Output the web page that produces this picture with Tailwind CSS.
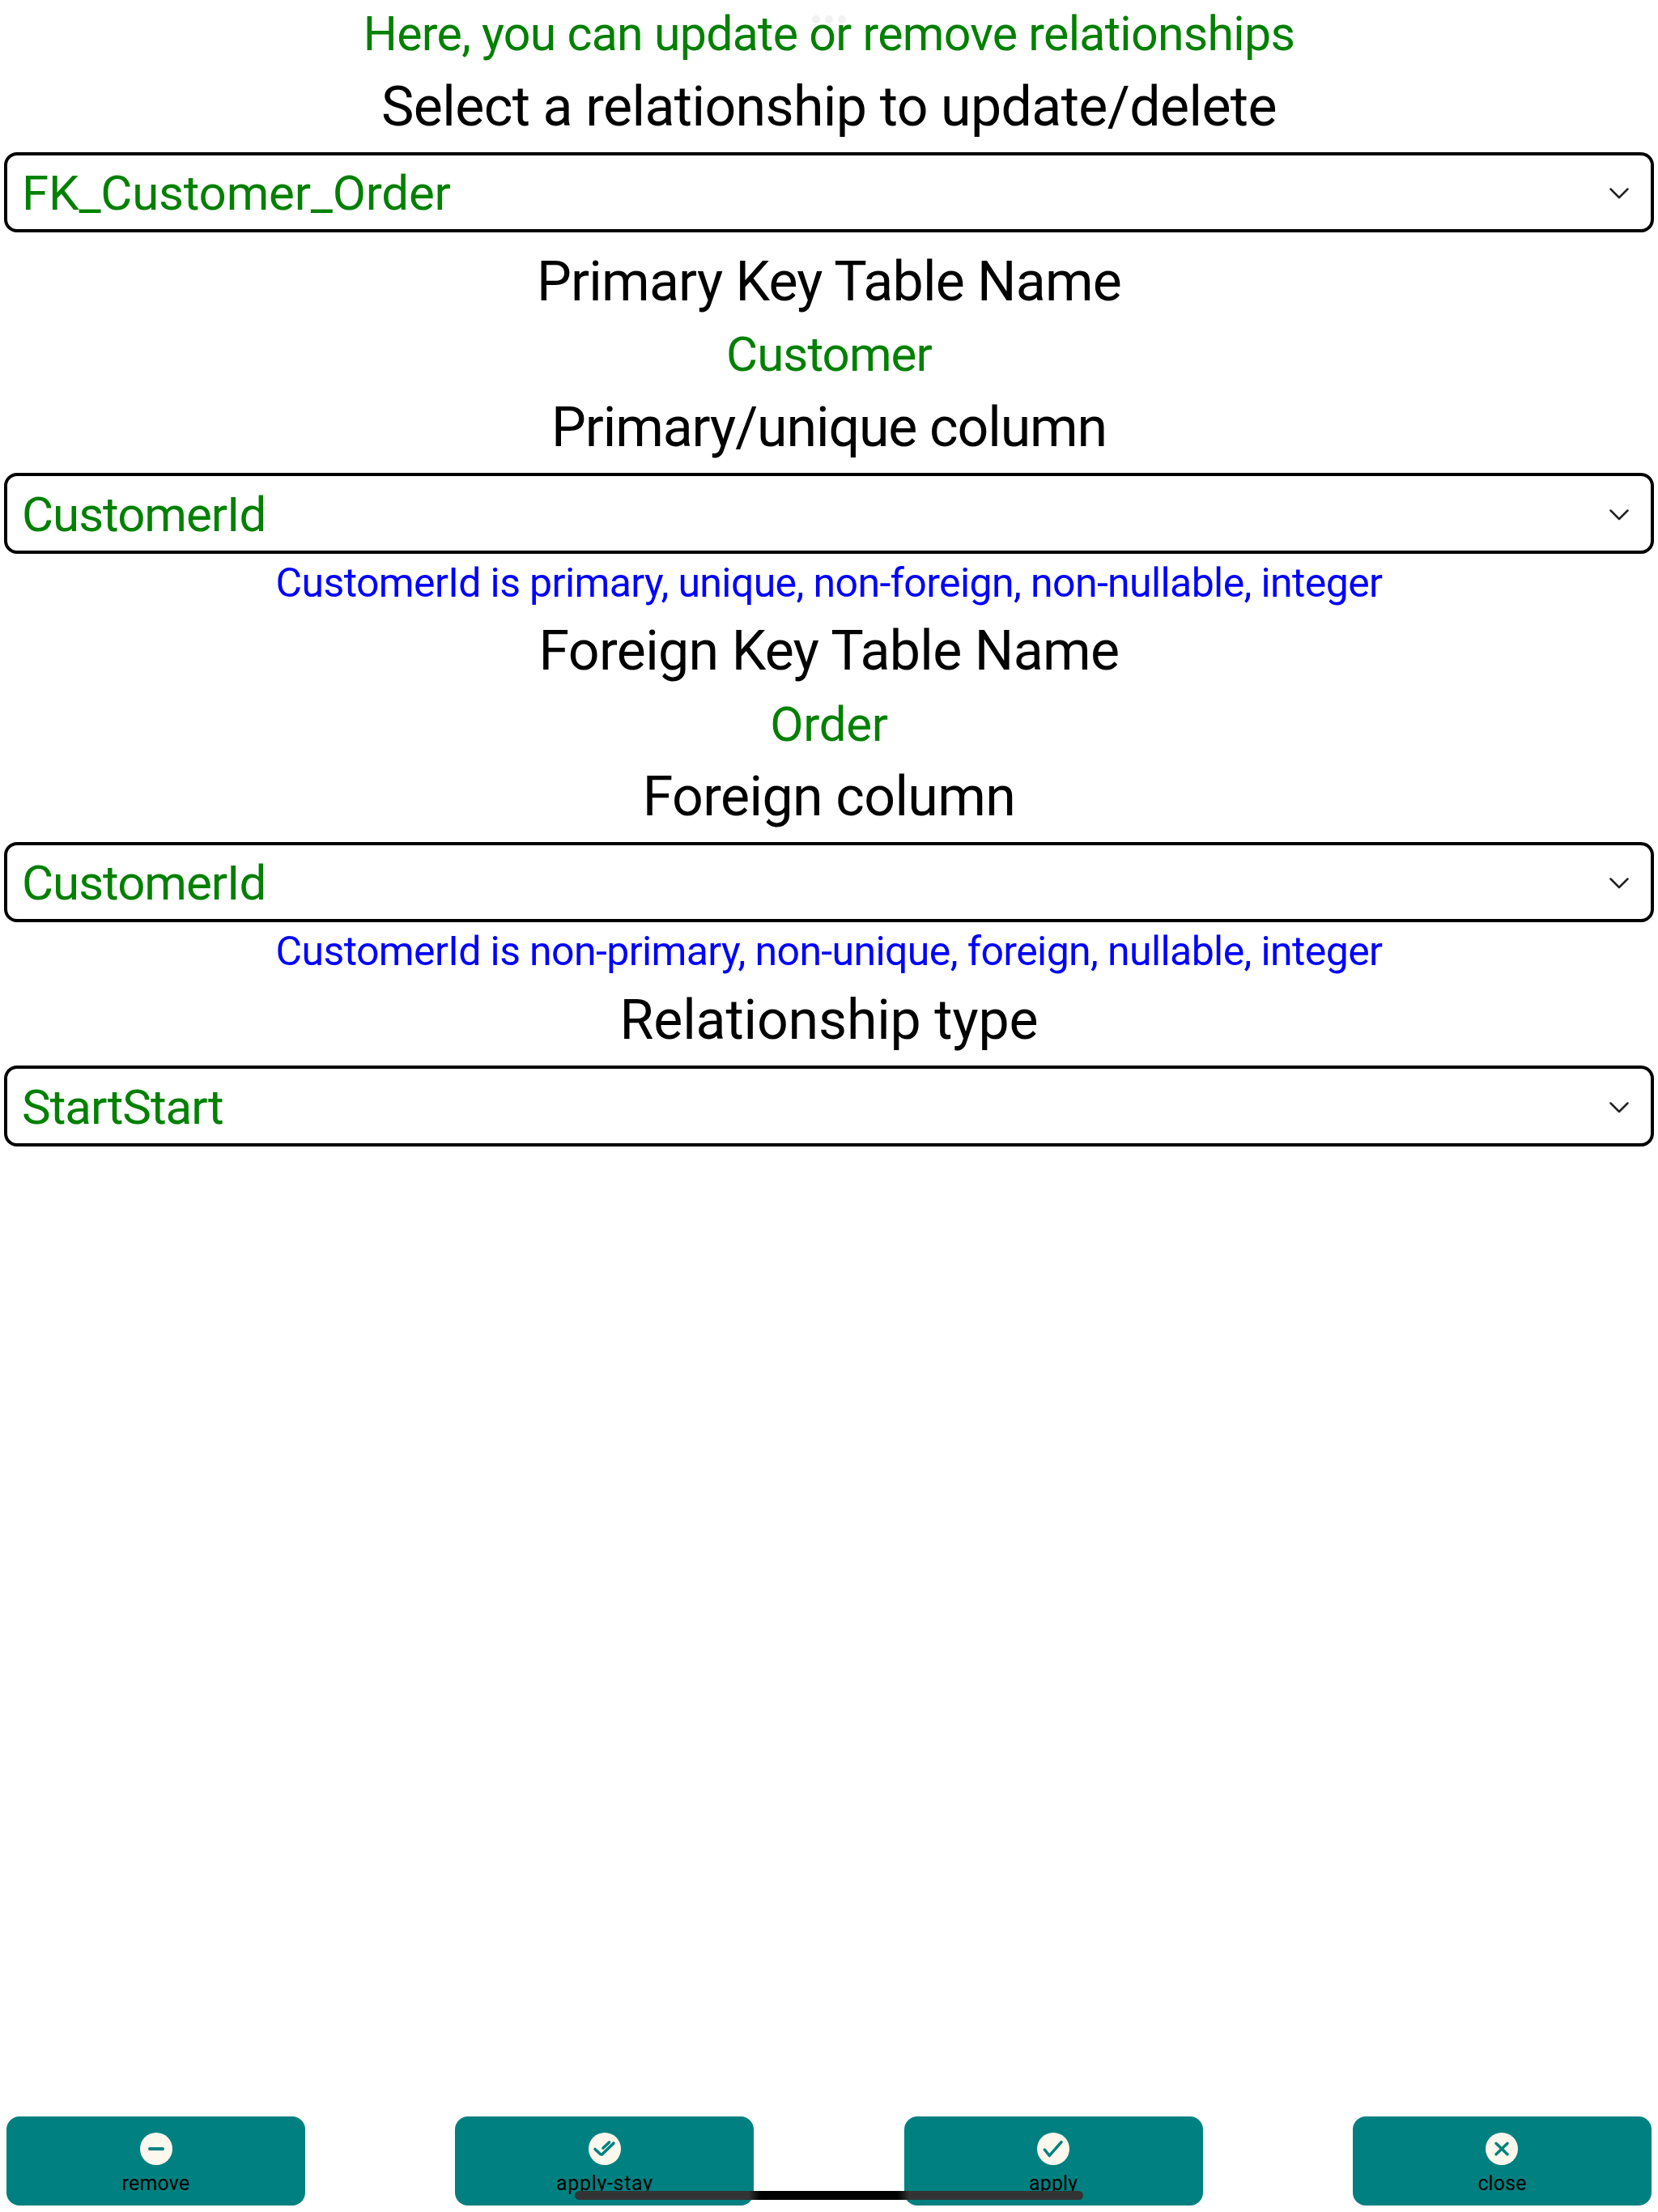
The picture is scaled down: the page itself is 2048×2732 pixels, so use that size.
<!doctype html>
<html><head><meta charset="utf-8"><script src="https://cdn.jsdelivr.net/npm/@tailwindcss/browser@4"></script></head>
<body class="bg-white">
<div class="relative w-[2048px] h-[2732px] overflow-hidden bg-white font-['Roboto',sans-serif] flex flex-col">
  <div class="absolute left-[1003px] top-[19px] flex gap-[6px]"><span class="size-[10px] rounded-full bg-[#f2f2f2]"></span><span class="size-[10px] rounded-full bg-[#f2f2f2]"></span><span class="size-[10px] rounded-full bg-[#f2f2f2]"></span></div>
  <div class="relative h-[84px] flex items-center justify-center text-[59px] tracking-[-0.7px] text-[#008000]">Here, you can update or remove relationships</div>
  <div class="h-[94px] mb-[10px] pt-[2px] flex items-center justify-center text-[68px] tracking-[-0.6px] text-black">Select a relationship to update/delete</div>
  <div class="h-[99px] mx-[5px] border-[4px] border-black rounded-[16px] flex items-center justify-between pl-[18px] pt-[3px] pr-[27px] text-[60px] tracking-[-0.2px] text-[#008000]"><span>FK_Customer_Order</span><svg width="24" height="14" viewBox="0 0 24 14" fill="none" stroke="#222" stroke-width="2.5" stroke-linecap="round" stroke-linejoin="round"><path d="M1.5 1.5 L12 12 L22.5 1.5"/></svg></div>
  <div class="h-[120px] pt-[2px] flex items-center justify-center text-[68px] tracking-[-0.8px] text-black">Primary Key Table Name</div>
  <div class="h-[61px] flex items-center justify-center text-[60px] tracking-[-0.9px] text-[#008000]">Customer</div>
  <div class="h-[116px] pt-[3px] flex items-center justify-center text-[68px] tracking-[-1.1px] text-black">Primary/unique column</div>
  <div class="h-[100px] mx-[5px] border-[4px] border-black rounded-[16px] flex items-center justify-between pl-[18px] pt-[3px] pr-[27px] text-[60px] tracking-[-1px] text-[#008000]"><span>CustomerId</span><svg width="24" height="14" viewBox="0 0 24 14" fill="none" stroke="#222" stroke-width="2.5" stroke-linecap="round" stroke-linejoin="round"><path d="M1.5 1.5 L12 12 L22.5 1.5"/></svg></div>
  <div class="h-[72px] flex items-center justify-center text-[50px] tracking-[-0.62px] text-[#0000ff]">CustomerId is primary, unique, non-foreign, non-nullable, integer</div>
  <div class="h-[96px] flex items-center justify-center text-[68px] tracking-[-0.65px] text-black">Foreign Key Table Name</div>
  <div class="h-[86px] flex items-center justify-center text-[60px] tracking-[-0.3px] text-[#008000]">Order</div>
  <div class="h-[92px] mb-[10px] flex items-center justify-center text-[68px] tracking-[-0.6px] text-black">Foreign column</div>
  <div class="h-[99px] mx-[5px] border-[4px] border-black rounded-[16px] flex items-center justify-between pl-[18px] pt-[3px] pr-[27px] text-[60px] tracking-[-1px] text-[#008000]"><span>CustomerId</span><svg width="24" height="14" viewBox="0 0 24 14" fill="none" stroke="#222" stroke-width="2.5" stroke-linecap="round" stroke-linejoin="round"><path d="M1.5 1.5 L12 12 L22.5 1.5"/></svg></div>
  <div class="h-[72px] flex items-center justify-center text-[50px] tracking-[-0.62px] text-[#0000ff]">CustomerId is non-primary, non-unique, foreign, nullable, integer</div>
  <div class="h-[98px] mb-[7px] flex items-center justify-center text-[68px] tracking-[-0.15px] text-black">Relationship type</div>
  <div class="h-[100px] mx-[5px] border-[4px] border-black rounded-[16px] flex items-center justify-between pl-[18px] pt-[3px] pr-[27px] text-[60px] tracking-[-1px] text-[#008000]"><span>StartStart</span><svg width="24" height="14" viewBox="0 0 24 14" fill="none" stroke="#222" stroke-width="2.5" stroke-linecap="round" stroke-linejoin="round"><path d="M1.5 1.5 L12 12 L22.5 1.5"/></svg></div>

  <div class="mt-auto mb-[8px] mx-[8px] flex justify-between">
    <div class="w-[369px] h-[110px] rounded-[16px] bg-[#008080] flex flex-col items-center pt-[20px]">
      <svg width="40" height="40" viewBox="0 0 40 40"><circle cx="20" cy="20" r="20" fill="#fdf8ee"/><path d="M12 20 H28" stroke="#008080" stroke-width="4" stroke-linecap="round"/></svg>
      <span class="mt-[8px] text-[25px] tracking-[0.2px] leading-[30px] text-black">remove</span></div>
    <div class="w-[369px] h-[110px] rounded-[16px] bg-[#008080] flex flex-col items-center pt-[20px]">
      <svg width="40" height="40" viewBox="0 0 40 40"><circle cx="20" cy="20" r="20" fill="#fdf8ee"/><path d="M8 20.5 L14.5 26.5 M16.5 27 L31 13 M18 19 L25.5 12" fill="none" stroke="#008080" stroke-width="3.6" stroke-linecap="round"/></svg>
      <span class="mt-[8px] text-[25px] tracking-[0.7px] leading-[30px] text-black">apply-stay</span></div>
    <div class="w-[369px] h-[110px] rounded-[16px] bg-[#008080] flex flex-col items-center pt-[20px]">
      <svg width="40" height="40" viewBox="0 0 40 40"><circle cx="20" cy="20" r="20" fill="#fdf8ee"/><path d="M9.3 21 L15.3 28.3 L30 11.7" fill="none" stroke="#008080" stroke-width="3.5" stroke-linecap="round" stroke-linejoin="round"/></svg>
      <span class="mt-[8px] text-[25px] tracking-[0.1px] leading-[30px] text-black">apply</span></div>
    <div class="w-[369px] h-[110px] rounded-[16px] bg-[#008080] flex flex-col items-center pt-[20px]">
      <svg width="40" height="40" viewBox="0 0 40 40"><circle cx="20" cy="20" r="20" fill="#fdf8ee"/><path d="M13 13.3 L27 26.7 M27 13.3 L13 26.7" fill="none" stroke="#008080" stroke-width="3.5" stroke-linecap="round"/></svg>
      <span class="mt-[8px] text-[25px] tracking-[0.1px] leading-[30px] text-black">close</span></div>
  </div>
  <div class="absolute left-[710px] top-[2706px] w-[628px] h-[11px] rounded-full bg-[linear-gradient(90deg,#333_0,#333_215px,#000_230px,#000_398px,#333_413px,#333_100%)]"></div>
</div>
</body></html>
